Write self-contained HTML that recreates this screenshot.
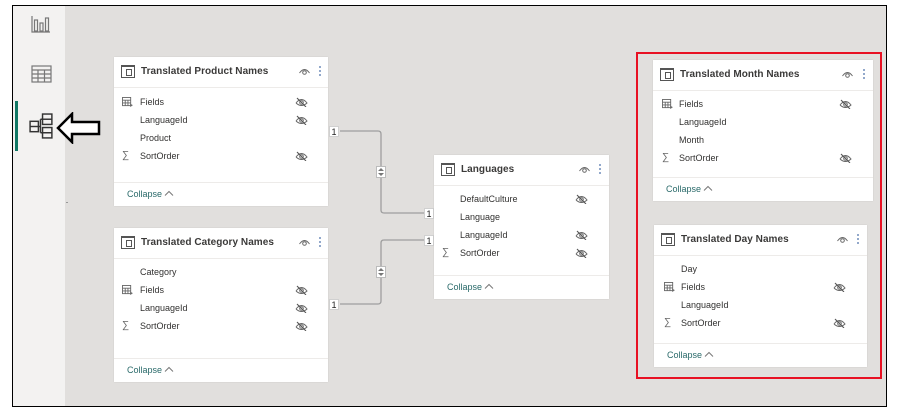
<!DOCTYPE html>
<html><head><meta charset="utf-8"><style>
*{margin:0;padding:0;box-sizing:border-box}
body{width:902px;height:415px;background:#fff;position:relative;overflow:hidden;font-family:"Liberation Sans",sans-serif;}
.frame{position:absolute;left:12px;top:5px;width:875px;height:402px;border:1.5px solid #000;background:#e1dfdd}
.side{position:absolute;left:13px;top:6px;width:52px;height:400px;background:#f3f2f1}
.card{position:absolute;background:#fff;box-shadow:0 0 1px rgba(0,0,0,.15)}
.hd{height:31px;border-bottom:1px solid #edebe9;position:relative}
.hd .t{position:absolute;left:27px;top:9px;font-size:10px;font-weight:bold;color:#3b3a39;letter-spacing:.05px}
.tic{position:absolute;left:7px;top:8px;width:14px;height:13px;border:1.3px solid #555;border-top-width:2px}
.tic:after{content:"";position:absolute;left:3.5px;top:2px;width:4px;height:5px;border:1px solid #555}
.eye{position:absolute;top:10px;width:11px;height:8px}
.dots{position:absolute;top:8px;width:2px;height:12px;background:radial-gradient(circle,#4a6fa8 0.7px,transparent 1px) 0 0/2px 4px}
.r{position:absolute;font-size:9px;color:#323130;height:18px;line-height:18px}
.ic{position:absolute;font-size:10px;color:#666}
.hid{position:absolute;width:13px;height:10px}
.col{position:absolute;font-size:9px;color:#2a6a6a;border-top:1px solid #edebe9;left:0;right:0;padding-left:13px;padding-top:6px}
.col svg{vertical-align:1px;margin-left:2px}
.one{position:absolute;width:10px;height:11px;background:#fff;font-size:9px;line-height:11px;text-align:center;color:#222;border:1px solid #d0d0d0}
.dia{position:absolute;width:10px;height:12px;background:#fff;border:1px solid #bbb}
</style></head><body>
<div class="frame"></div>
<div class="side"></div>
<div style="position:absolute;left:15px;top:101px;width:2.5px;height:50px;background:#117865"></div>
<svg style="position:absolute;left:30px;top:14px" width="22" height="20" viewBox="0 0 22 20" fill="none" stroke="#777" stroke-width="1.2"><path d="M2 2v16h18"/><rect x="4.5" y="6" width="3" height="11"/><rect x="10" y="9" width="3" height="8"/><rect x="15.5" y="4" width="3" height="13"/></svg>
<svg style="position:absolute;left:31px;top:65px" width="21" height="18" viewBox="0 0 21 18" fill="none" stroke="#777" stroke-width="1.2"><rect x="1" y="1" width="19" height="16"/><path d="M1 5h19M1 9h19M1 13h19M7 5v12M13.5 5v12"/></svg>
<svg style="position:absolute;left:29px;top:113px" width="25" height="27" viewBox="0 0 24 26" fill="none" stroke="#333" stroke-width="1.4"><rect x="1" y="8" width="8" height="10"/><path d="M1 13h8"/><rect x="13" y="1" width="9" height="10"/><path d="M13 6h9"/><rect x="13" y="14" width="9" height="10"/><path d="M13 19h9M9 13h2M11 6v13M11 6h2M11 19h2"/></svg>
<svg style="position:absolute;left:56px;top:112px" width="46" height="32" viewBox="0 0 46 32"><path d="M2 16L16 2v8h27v12H16v8z" fill="#fff" stroke="#000" stroke-width="2.5" stroke-linejoin="miter"/></svg>
<div style="position:absolute;left:66px;top:202px;width:2px;height:1px;background:#999"></div>

<svg style="position:absolute;left:0;top:0" width="902" height="415" fill="none" stroke="#9e9e9e" stroke-width="1.3">
<path d="M340 131H378q3 0 3 3V210q0 3 3 3H425"/>
<path d="M340 304H378q3 0 3 -3V243q0 -3 3 -3H425"/>
</svg>
<div class="one" style="left:329px;top:126px">1</div>
<div class="one" style="left:424px;top:208px">1</div>
<div class="one" style="left:424px;top:235px">1</div>
<div class="one" style="left:329px;top:299px">1</div>
<div class="dia" style="left:376px;top:166px"><svg width="8" height="10" style="position:absolute;left:0;top:0" viewBox="0 0 8 10"><path d="M4 1L7 4H1zM4 9L7 6H1z" fill="#777"/></svg></div>
<div class="dia" style="left:376px;top:266px"><svg width="8" height="10" style="position:absolute;left:0;top:0" viewBox="0 0 8 10"><path d="M4 1L7 4H1zM4 9L7 6H1z" fill="#777"/></svg></div>

<svg width="0" height="0" style="position:absolute"><defs>
<symbol id="eye" viewBox="0 0 11 8"><path d="M0.5 6Q5.5 -1 10.5 6" fill="none" stroke="#666" stroke-width="1"/><circle cx="5.5" cy="5.5" r="1.8" fill="none" stroke="#666" stroke-width="1"/></symbol>
<symbol id="hid" viewBox="0 0 13 10"><path d="M1 6Q6.5 -1 12 6Q6.5 11 1 6" fill="none" stroke="#666" stroke-width="1"/><circle cx="6.5" cy="5.5" r="1.8" fill="none" stroke="#666"/><path d="M2 1L11 10" stroke="#555" stroke-width="1.1"/></symbol>
<symbol id="fld" viewBox="0 0 12 11"><rect x="0.5" y="0.5" width="9" height="9" fill="none" stroke="#666"/><path d="M0.5 3.5h9M3.5 3.5v6M6.5 3.5v6M0.5 6.5h9" stroke="#666"/><path d="M9 8l2 1-2 1.5" fill="none" stroke="#666"/></symbol>
<symbol id="chev" viewBox="0 0 10 6"><path d="M1 5.5L5 1.5 9 5.5" fill="none" stroke="#777" stroke-width="1"/></symbol>
</defs></svg>

<div class="card" style="left:114px;top:57px;width:214px;height:149px">
 <div class="hd"><div class="tic"></div><div class="t">Translated Product Names</div><svg class="eye" style="left:185px"><use href="#eye"/></svg><div class="dots" style="left:205px"></div></div>
 <svg class="hid" style="left:7px;top:40px" width="12" height="11"><use href="#fld"/></svg>
 <div class="r" style="left:26px;top:36px">Fields</div><svg class="hid" style="left:181px;top:40px"><use href="#hid"/></svg>
 <div class="r" style="left:26px;top:54px">LanguageId</div><svg class="hid" style="left:181px;top:58px"><use href="#hid"/></svg>
 <div class="r" style="left:26px;top:72px">Product</div>
 <div class="ic" style="left:8px;top:93px">∑</div><div class="r" style="left:26px;top:90px">SortOrder</div><svg class="hid" style="left:181px;top:94px"><use href="#hid"/></svg>
 <div class="col" style="top:125px;height:24px">Collapse<svg width="10" height="6"><use href="#chev"/></svg></div>
</div>

<div class="card" style="left:114px;top:228px;width:214px;height:154px">
 <div class="hd"><div class="tic"></div><div class="t">Translated Category Names</div><svg class="eye" style="left:185px"><use href="#eye"/></svg><div class="dots" style="left:205px"></div></div>
 <div class="r" style="left:26px;top:35px">Category</div>
 <svg class="hid" style="left:7px;top:57px" width="12" height="11"><use href="#fld"/></svg>
 <div class="r" style="left:26px;top:53px">Fields</div><svg class="hid" style="left:181px;top:57px"><use href="#hid"/></svg>
 <div class="r" style="left:26px;top:71px">LanguageId</div><svg class="hid" style="left:181px;top:75px"><use href="#hid"/></svg>
 <div class="ic" style="left:8px;top:92px">∑</div><div class="r" style="left:26px;top:89px">SortOrder</div><svg class="hid" style="left:181px;top:93px"><use href="#hid"/></svg>
 <div class="col" style="top:130px;height:24px">Collapse<svg width="10" height="6"><use href="#chev"/></svg></div>
</div>

<div class="card" style="left:434px;top:155px;width:175px;height:144px">
 <div class="hd"><div class="tic"></div><div class="t">Languages</div><svg class="eye" style="left:145px"><use href="#eye"/></svg><div class="dots" style="left:165px"></div></div>
 <div class="r" style="left:26px;top:35px">DefaultCulture</div><svg class="hid" style="left:141px;top:39px"><use href="#hid"/></svg>
 <div class="r" style="left:26px;top:53px">Language</div>
 <div class="r" style="left:26px;top:71px">LanguageId</div><svg class="hid" style="left:141px;top:75px"><use href="#hid"/></svg>
 <div class="ic" style="left:8px;top:92px">∑</div><div class="r" style="left:26px;top:89px">SortOrder</div><svg class="hid" style="left:141px;top:93px"><use href="#hid"/></svg>
 <div class="col" style="top:120px;height:24px">Collapse<svg width="10" height="6"><use href="#chev"/></svg></div>
</div>

<div style="position:absolute;left:636px;top:52px;width:246px;height:327px;border:2.5px solid #e81123"></div>

<div class="card" style="left:653px;top:60px;width:220px;height:141px">
 <div class="hd"><div class="tic"></div><div class="t">Translated Month Names</div><svg class="eye" style="left:189px"><use href="#eye"/></svg><div class="dots" style="left:210px"></div></div>
 <svg class="hid" style="left:8px;top:39px" width="12" height="11"><use href="#fld"/></svg>
 <div class="r" style="left:26px;top:35px">Fields</div><svg class="hid" style="left:186px;top:39px"><use href="#hid"/></svg>
 <div class="r" style="left:26px;top:53px">LanguageId</div>
 <div class="r" style="left:26px;top:71px">Month</div>
 <div class="ic" style="left:9px;top:92px">∑</div><div class="r" style="left:26px;top:89px">SortOrder</div><svg class="hid" style="left:186px;top:93px"><use href="#hid"/></svg>
 <div class="col" style="top:117px;height:24px">Collapse<svg width="10" height="6"><use href="#chev"/></svg></div>
</div>

<div class="card" style="left:654px;top:225px;width:213px;height:142px">
 <div class="hd"><div class="tic"></div><div class="t">Translated Day Names</div><svg class="eye" style="left:183px"><use href="#eye"/></svg><div class="dots" style="left:203px"></div></div>
 <div class="r" style="left:27px;top:35px">Day</div>
 <svg class="hid" style="left:9px;top:57px" width="12" height="11"><use href="#fld"/></svg>
 <div class="r" style="left:27px;top:53px">Fields</div><svg class="hid" style="left:179px;top:57px"><use href="#hid"/></svg>
 <div class="r" style="left:27px;top:71px">LanguageId</div>
 <div class="ic" style="left:10px;top:92px">∑</div><div class="r" style="left:27px;top:89px">SortOrder</div><svg class="hid" style="left:179px;top:93px"><use href="#hid"/></svg>
 <div class="col" style="top:118px;height:24px">Collapse<svg width="10" height="6"><use href="#chev"/></svg></div>
</div>
</body></html>
